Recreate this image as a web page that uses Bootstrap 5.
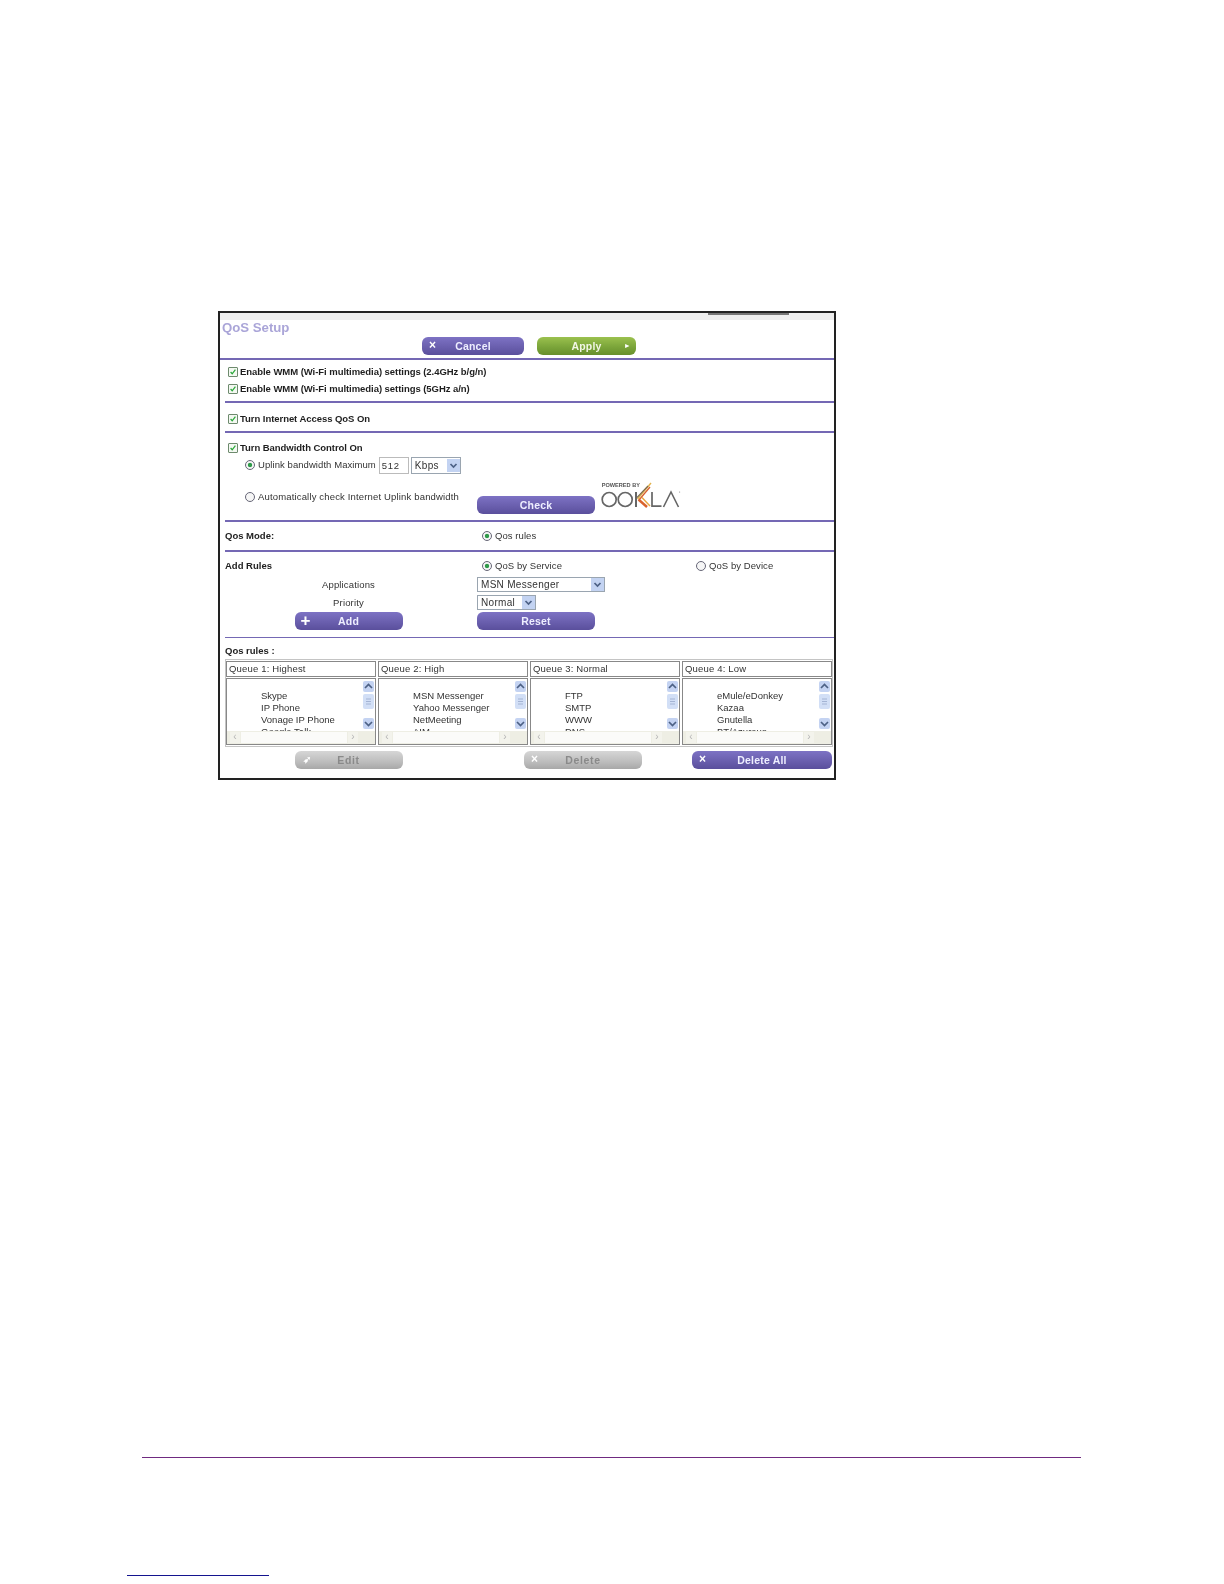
<!DOCTYPE html>
<html lang="en">
<head>
<meta charset="utf-8">
<title>QoS Setup</title>
<link href="https://cdn.jsdelivr.net/npm/bootstrap@5.3.0/dist/css/bootstrap.min.css" rel="stylesheet">
<style>
:root{--plg:linear-gradient(#7d72c4,#6a5fae 55%,#5a4f9c);--gr:linear-gradient(#9bc14e,#7ba53a 55%,#678f2c);}
html,body{background:#fff;margin:0;padding:0;}
body{width:1224px;height:1584px;overflow:hidden;font-family:"Liberation Sans",Arial,sans-serif;color:#222;}
.sheet{padding-top:311px;padding-left:218px;height:1457px;}
.panel{width:618px;height:469px;border:2px solid #222;background:#fff;font-size:9.5px;line-height:12px;}
.topband{height:7px;background:#eee;position:relative;}
.topband::after{content:"";position:absolute;left:488px;top:0;width:81px;height:2px;background:#777;}
.ttl{height:15px;padding-left:2px;font-size:13.2px;line-height:15px;font-weight:700;color:#aaa5d8;}
.act{height:23px;padding-top:2px;gap:13px;padding-left:202px;}
.hr1{height:2px;background:#7468b4;}
.hr2{margin-left:5px;}
.pbtn{display:flex;align-items:center;height:18px;padding:0;border:0;border-radius:6px;background:var(--plg);color:#eef;font:700 10.5px/18px "Liberation Sans",sans-serif;position:relative;justify-content:center;letter-spacing:.2px;flex:none;}
.pbtn.grn{background:var(--gr);color:#f2f6e4;}
.pbtn.off{background:linear-gradient(#d6d6d6,#bdbdbd 60%,#a8a8a8);color:#8a8a8a;letter-spacing:.7px;}
.pbtn .ic{position:absolute;left:7px;top:0;font-size:12px;line-height:17px;font-weight:700;color:#fff;}
.pbtn .ic2{position:absolute;right:5px;top:0;font-size:7px;line-height:18px;color:#fff;}
.w102{width:102px;}.w99{width:99px;}.w108{width:108px;}.w118{width:118px;}.w140{width:140px;}
.sec1{height:41px;padding:3px 0 0 8px;}
.sec2{height:28px;padding:7px 0 0 8px;}
.sec3{height:87px;padding:6px 0 0 8px;}
.chkrow{display:flex;align-items:center;height:17px;gap:2px;font-weight:700;color:#1e1e1e;white-space:nowrap;letter-spacing:-.05px;}
.form-check-input.box{width:10px;height:10px;margin:0;border:1px solid #6d8a6d;border-radius:1px;background-color:#f4f8f2;background-image:none;flex:none;}
.form-check-input.box:checked{background-color:#f4f8f2;border-color:#6d8a6d;background-image:url("data:image/svg+xml,%3Csvg xmlns='http://www.w3.org/2000/svg' viewBox='0 0 10 10'%3E%3Cpath d='M2 5l2 2.2L8 2' fill='none' stroke='%2328a838' stroke-width='1.5'/%3E%3C/svg%3E");background-size:100% 100%;}
.form-check-input.rd{width:10px;height:10px;margin:0;border:1px solid #667;background-color:#f6f6f6;flex:none;background-image:none;}
.form-check-input.rd:checked{background-color:#f6f6f6;border-color:#667;background-image:radial-gradient(circle,#2f9a4a 0 1.8px,transparent 2.6px);background-size:auto;}
.lbl{display:flex;align-items:center;gap:3px;letter-spacing:.07px;color:#333;white-space:nowrap;margin:0;}
.up{height:18px;padding-left:17px;display:flex;align-items:center;}
.autorow{height:27px;margin-top:14px;padding-left:17px;display:flex;align-items:flex-start;}
.autorow .lbl{height:18px;width:232px;flex:none;letter-spacing:.16px;}
.autorow .pbtn{margin-top:8px;}
.numbox{width:30px;height:17px;margin:0 2px 0 3px;padding:0 2px;border:1px solid #bbb;border-radius:0;font:9.5px/15px "Liberation Sans",sans-serif;letter-spacing:.7px;color:#333;min-height:0;flex:none;}
.sel{height:15px;min-height:0;border:1px solid #9aa5b0;border-radius:0;padding:0 0 0 3px;font:10px/13px "Liberation Sans",sans-serif;letter-spacing:.3px;color:#333;background-size:13px 13px;background-position:right 0 center;background-repeat:no-repeat;background-color:#fff;background-image:url("data:image/svg+xml,%3Csvg xmlns='http://www.w3.org/2000/svg' viewBox='0 0 13 13'%3E%3Crect width='13' height='13' fill='%23c3d3f2'/%3E%3Cpath d='M3.5 5l3 3 3-3' fill='none' stroke='%234d6185' stroke-width='1.7'/%3E%3C/svg%3E");flex:none;}
.sel.tall{height:17px;background-size:13px 15px;}
.w49{width:50px;}.w127{width:128px;}.w58{width:59px;}
.ookla{margin:-8px 0 0 6px;flex:none;}
.sec4{height:28px;display:flex;align-items:center;}
.colA{width:262px;padding-left:5px;flex:none;}
.bold{font-weight:700;color:#222;}
.sec5{height:85px;padding-top:4px;}
.frow{display:flex;}
.rowA{height:20px;align-items:center;}
.rowA .first{width:214px;}
.rowB{height:18px;align-items:flex-start;padding-top:1px;}
.rowB .ctr{line-height:15px;}
.rowC{height:18px;}
.ctr{width:257px;flex:none;display:flex;justify-content:center;letter-spacing:.15px;color:#333;}
.hrthin{height:1px;}
.sec6{height:21px;padding:7px 0 0 5px;}
.qrow{display:flex;margin-left:5px;width:608px;border:1px solid #c4c4c4;padding:1px 0;gap:2px;}
.qcol{width:150px;flex:none;}
.qh{height:16px;border:1px solid #888;line-height:14px;padding-left:2px;letter-spacing:.17px;color:#333;background:#fff;}
.qb{height:67px;margin-top:1px;border:1px solid #888;position:relative;overflow:hidden;background:#fff;}
.items{padding:11px 0 0 34px;line-height:12px;color:#333;white-space:nowrap;}
.sbv{position:absolute;right:0;top:0;bottom:0;width:12px;background:#fff;padding-top:2px;}
.arr{display:block;width:11px;height:11px;border-radius:2px;background:#c4d3f2 center/9px 9px no-repeat url("data:image/svg+xml,%3Csvg xmlns='http://www.w3.org/2000/svg' viewBox='0 0 9 9'%3E%3Cpath d='M1 6l3.5-3.5L8 6' fill='none' stroke='%234d6185' stroke-width='1.7'/%3E%3C/svg%3E");}
.arr.dn{position:absolute;left:0;top:39px;transform:scaleY(-1);}
.thumb{width:11px;height:15px;margin-top:2px;border-radius:2px;background:#d2dff6 center/7px 7px no-repeat url("data:image/svg+xml,%3Csvg xmlns='http://www.w3.org/2000/svg' viewBox='0 0 7 7'%3E%3Cpath d='M1 1h5M1 3.5h5M1 6h5' stroke='%23a4b4d4'/%3E%3C/svg%3E");}
.sbh{position:absolute;left:0;right:0;bottom:0;height:13px;background:#eeeee4;display:flex;align-items:center;justify-content:space-between;padding:0 17px 0 3px;color:#b5b5b5;font-size:10px;}
.sbh i{position:relative;z-index:1;display:block;font-style:normal;width:10px;height:11px;background:#f3f3ec;text-align:center;line-height:10px;}
.sbh u{position:absolute;left:14px;right:28px;top:1px;bottom:1px;background:#fbfbf9;}
.btm{display:flex;padding-top:4px;}
.foot{margin-left:142px;width:939px;height:1px;background:#6f2a80;}
.bluel{margin:117px 0 0 127px;width:142px;height:1px;background:#14148f;}
.soft{filter:blur(.35px);}
.ms47{margin-left:47px;}.ms50{margin-left:50px;}
</style>
</head>
<body>
<div class="sheet">
<div class="panel soft">
  <div class="topband"></div>
  <div class="ttl">QoS Setup</div>
  <div class="act d-flex">
    <button class="pbtn w102"><span class="ic">×</span>Cancel</button>
    <button class="pbtn grn w99">Apply<span class="ic2">►</span></button>
  </div>
  <div class="hr1"></div>
  <div class="sec1">
    <label class="chkrow"><input class="form-check-input box" type="checkbox" checked>Enable WMM (Wi-Fi multimedia) settings (2.4GHz b/g/n)</label>
    <label class="chkrow"><input class="form-check-input box" type="checkbox" checked>Enable WMM (Wi-Fi multimedia) settings (5GHz a/n)</label>
  </div>
  <div class="hr1 hr2"></div>
  <div class="sec2"><label class="chkrow"><input class="form-check-input box" type="checkbox" checked>Turn Internet Access QoS On</label></div>
  <div class="hr1 hr2"></div>
  <div class="sec3">
    <label class="chkrow"><input class="form-check-input box" type="checkbox" checked>Turn Bandwidth Control On</label>
    <div class="up"><label class="lbl"><input class="form-check-input rd" type="radio" name="u" checked>Uplink bandwidth Maximum</label><input class="form-control numbox" value="512"><select class="form-select sel tall w49"><option>Kbps</option></select></div>
    <div class="autorow"><label class="lbl"><input class="form-check-input rd" type="radio" name="u">Automatically check Internet Uplink bandwidth</label>
      <button class="pbtn w118">Check</button>
      <svg class="ookla" width="80" height="28" viewBox="0 0 80 28" role="img" aria-label="Ookla logo">
        <text x="0.7" y="7" font-family="Liberation Sans" font-size="5.6" font-weight="700" fill="#555">POWERED BY</text>
        <circle cx="8.2" cy="19.5" r="7" fill="none" stroke="#666" stroke-width="1.7"/>
        <circle cx="24.2" cy="19.5" r="7" fill="none" stroke="#666" stroke-width="1.7"/>
        <path d="M35 12v15" stroke="#666" stroke-width="2"/>
        <path d="M36.5 19L50 3" stroke="#e2b24a" stroke-width="1.4"/><path d="M36 17.5L47 6" stroke="#7a6a50" stroke-width="1.1"/><path d="M38 20L49 7" stroke="#d8602e" stroke-width="1.3"/>
        <path d="M37.5 19.5L46 27" stroke="#d9622c" stroke-width="2.4"/><path d="M41 17.5L49 26" stroke="#e8a63e" stroke-width="1.4"/>
        <path d="M51 12v14.2h9.5" fill="none" stroke="#666" stroke-width="1.7"/>
        <path d="M62.5 27L70 12l7.5 15" fill="none" stroke="#666" stroke-width="1.6"/>
        <circle cx="78.6" cy="12" r=".6" fill="#888"/>
      </svg>
    </div>
  </div>
  <div class="hr1 hr2"></div>
  <div class="sec4"><div class="colA bold">Qos Mode:</div><label class="lbl"><input class="form-check-input rd" type="radio" checked>Qos rules</label></div>
  <div class="hr1 hr2"></div>
  <div class="sec5">
    <div class="frow rowA"><div class="colA bold">Add Rules</div><label class="lbl first"><input class="form-check-input rd" type="radio" name="q" checked>QoS by Service</label><label class="lbl"><input class="form-check-input rd" type="radio" name="q">QoS by Device</label></div>
    <div class="frow rowB"><div class="ctr">Applications</div><select class="form-select sel w127"><option>MSN Messenger</option></select></div>
    <div class="frow rowB"><div class="ctr">Priority</div><select class="form-select sel w58"><option>Normal</option></select></div>
    <div class="frow rowC"><div class="ctr"><button class="pbtn w108"><span class="ic" style="font-size:17px;left:6px">+</span>Add</button></div><button class="pbtn w118">Reset</button></div>
  </div>
  <div class="hr1 hr2 hrthin"></div>
  <div class="sec6 bold">Qos rules :</div>
  <div class="qrow">
    <div class="qcol"><div class="qh">Queue 1: Highest</div><div class="qb"><div class="items">Skype<br>IP Phone<br>Vonage IP Phone<br>Google Talk</div><div class="sbv"><span class="arr"></span><div class="thumb"></div><span class="arr dn"></span></div><div class="sbh"><u></u><i>‹</i><i>›</i></div></div></div>
    <div class="qcol"><div class="qh">Queue 2: High</div><div class="qb"><div class="items">MSN Messenger<br>Yahoo Messenger<br>NetMeeting<br>AIM</div><div class="sbv"><span class="arr"></span><div class="thumb"></div><span class="arr dn"></span></div><div class="sbh"><u></u><i>‹</i><i>›</i></div></div></div>
    <div class="qcol"><div class="qh">Queue 3: Normal</div><div class="qb"><div class="items">FTP<br>SMTP<br>WWW<br>DNS</div><div class="sbv"><span class="arr"></span><div class="thumb"></div><span class="arr dn"></span></div><div class="sbh"><u></u><i>‹</i><i>›</i></div></div></div>
    <div class="qcol"><div class="qh">Queue 4: Low</div><div class="qb"><div class="items">eMule/eDonkey<br>Kazaa<br>Gnutella<br>BT/Azureus</div><div class="sbv"><span class="arr"></span><div class="thumb"></div><span class="arr dn"></span></div><div class="sbh"><u></u><i>‹</i><i>›</i></div></div></div>
  </div>
  <div class="btm">
    <div class="ctr"><button class="pbtn off w108"><span class="ic" style="font-size:10px;left:8px">➶</span>Edit</button></div>
    <button class="pbtn off w118 ms47"><span class="ic">×</span>Delete</button>
    <button class="pbtn w140 ms50"><span class="ic">×</span>Delete All</button>
  </div>
</div>
</div>
<div class="foot"></div>
<div class="bluel"></div>
</body>
</html>
